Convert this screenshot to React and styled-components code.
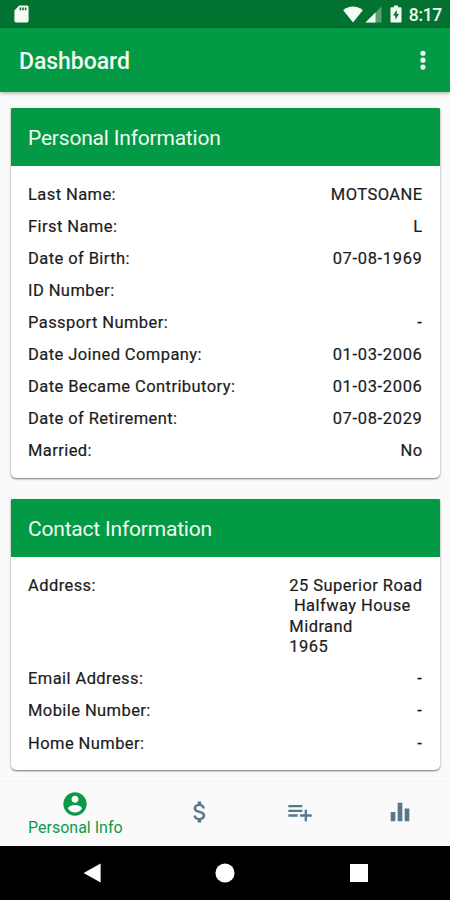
import styled, { createGlobalStyle } from "styled-components";

const GlobalStyle = createGlobalStyle`
	* {
		box-sizing: border-box;
	}
	body {
		margin: 0;
		background-color: #fafafa;
		font-family: Roboto, sans-serif;
	}
`;

const Container = styled.div`
	width: 450px;
	height: 900px;
	display: flex;
	flex-direction: column;
	overflow: hidden;
	background-color: #fafafa;
	color: #1c1c1c;
`;

const StatusBar = styled.div`
	height: 28px;
	flex: none;
	display: flex;
	align-items: center;
	justify-content: space-between;
	padding: 0 8px 0 14px;
	background-color: #027231;
	color: #f3fbf4;
`;

const StatusGroup = styled.div`
	display: flex;
	align-items: center;
`;

const StatusIcon = styled.svg`
	display: block;
	margin-right: ${(props) => props.$gap || 0}px;
`;

const Clock = styled.span`
	font-size: 17.5px;
	font-weight: 500;
	line-height: 28px;
	padding-top: 2px;
	letter-spacing: -0.3px;
`;

const AppBar = styled.header`
	height: 64px;
	flex: none;
	display: flex;
	align-items: center;
	justify-content: space-between;
	padding: 2px 13px 0 19px;
	background-color: #039a46;
	color: #f3fbf4;
	box-shadow: 0 1px 4px rgba(0, 0, 0, 0.35);
`;

const Title = styled.h1`
	margin: 0;
	font-size: 23px;
	font-weight: 500;
	letter-spacing: -0.05px;
`;

const Icon = styled.svg`
	display: block;
	width: 28px;
	height: 28px;
	fill: currentColor;
`;

const Content = styled.main`
	flex: 1;
	min-height: 0;
	display: flex;
	flex-direction: column;
	gap: 21px;
	padding: 16px 10px 0 11px;
`;

const Card = styled.section`
	height: ${(props) => props.$height}px;
	flex: none;
	overflow: hidden;
	border-radius: 1px 1px 5px 5px;
	background-color: #fff;
	box-shadow: 0 1px 2px rgba(0, 0, 0, 0.55);
`;

const CardTitle = styled.h2`
	margin: 0;
	height: 58px;
	padding: 1px 17px 0;
	font-size: 21px;
	font-weight: 400;
	line-height: 58px;
	letter-spacing: -0.2px;
	background-color: #039a46;
	color: #effaf0;
`;

const Rows = styled.dl`
	margin: 0;
	padding: 18.5px 17.5px 0 17px;
	display: flex;
	flex-direction: column;
	gap: 11.5px;
`;

const Row = styled.div`
	display: flex;
	justify-content: space-between;
	font-size: 16.5px;
	line-height: 20.6px;
	-webkit-text-stroke: 0.2px currentColor;
`;

const Label = styled.dt`
	letter-spacing: 0.42px;
`;

const Value = styled.dd`
	margin: 0;
	white-space: pre;
	letter-spacing: ${(props) => (props.$numeric ? 0.65 : 0.44)}px;
`;

const TabBar = styled.nav`
	height: 65px;
	flex: none;
	display: flex;
	border-top: 1px solid #f2f4f4;
	background-color: #fafafa;
`;

const Tab = styled.div`
	flex: ${(props) => (props.$active ? 1.5 : 1)};
	display: flex;
	flex-direction: column;
	align-items: center;
	padding: ${(props) => (props.$active ? 8 : 16)}px 0 0 1px;
	color: ${(props) => (props.$active ? "#0c9a4a" : "#56798a")};
`;

const TabLabel = styled.span`
	font-size: 16px;
	line-height: 19px;
`;

const NavBar = styled.footer`
	height: 54px;
	flex: none;
	display: flex;
	align-items: center;
	justify-content: center;
	gap: 114px;
	background-color: #000;
`;

const NavIcon = styled.svg`
	display: block;
	width: 20px;
	height: 20px;
	fill: #fff;
`;

const personal = [
	["Last Name:", "MOTSOANE"],
	["First Name:", "L"],
	["Date of Birth:", "07-08-1969"],
	["ID Number:", ""],
	["Passport Number:", "-"],
	["Date Joined Company:", "01-03-2006"],
	["Date Became Contributory:", "01-03-2006"],
	["Date of Retirement:", "07-08-2029"],
	["Married:", "No"],
];

const contact = [
	["Address:", "25 Superior Road\n Halfway House\nMidrand\n1965"],
	["Email Address:", "-"],
	["Mobile Number:", "-"],
	["Home Number:", "-"],
];

const tabs = [
	{
		label: "Personal Info",
		path: "M12 2C6.48 2 2 6.48 2 12s4.48 10 10 10 10-4.48 10-10S17.52 2 12 2zm0 3c1.66 0 3 1.34 3 3s-1.34 3-3 3-3-1.34-3-3 1.34-3 3-3zm0 14.2c-2.5 0-4.71-1.28-6-3.22.03-1.99 4-3.08 6-3.08 1.99 0 5.97 1.09 6 3.08-1.29 1.94-3.5 3.22-6 3.22z",
	},
	{
		path: "M11.8 10.9c-2.27-.59-3-1.2-3-2.15 0-1.09 1.01-1.85 2.7-1.85 1.78 0 2.44.85 2.5 2.1h2.21c-.07-1.72-1.12-3.3-3.21-3.81V3h-3v2.16c-1.94.42-3.5 1.68-3.5 3.61 0 2.31 1.91 3.46 4.7 4.13 2.5.6 3 1.48 3 2.41 0 .69-.49 1.79-2.7 1.79-2.06 0-2.87-.92-2.98-2.1h-2.2c.12 2.19 1.76 3.42 3.68 3.83V21h3v-2.15c1.95-.37 3.5-1.5 3.5-3.55 0-2.84-2.43-3.81-4.7-4.4z",
	},
	{
		path: "M14 10H2v2h12v-2zm0-4H2v2h12V6zm4 8v-4h-2v4h-4v2h4v4h2v-4h4v-2h-4zM2 16h8v-2H2v2z",
	},
	{
		path: "M10 20h4V4h-4v16zm-6 0h4v-8H4v8zM16 9v11h4V9h-4z",
	},
];

const InfoCard = ({ title, rows, height }) => (
	<Card $height={height}>
		<CardTitle>{title}</CardTitle>
		<Rows>
			{rows.map(([label, value]) => (
				<Row key={label}>
					<Label>{label}</Label>
					<Value $numeric={/^[\d-]+$/.test(value)}>{value}</Value>
				</Row>
			))}
		</Rows>
	</Card>
);

const App = () => {
	return (
		<>
			<GlobalStyle />
			<Container>
				<StatusBar>
					<StatusIcon width="15" height="18" viewBox="0 0 15 18" fill="currentColor">
						<path
							fillRule="evenodd"
							d="M5.2 0.6H13a1.6 1.6 0 0 1 1.6 1.6v13.6a1.6 1.6 0 0 1-1.6 1.6H2a1.6 1.6 0 0 1-1.6-1.6V5.4zM5.6 2.4v2.8h1.6V2.4zM8.2 2.4v2.8h1.6V2.4zM10.8 2.4v2.8h1.6V2.4z"
						/>
					</StatusIcon>
					<StatusGroup>
						<StatusIcon $gap={2} width="20" height="17" viewBox="0 0 20 17" fill="currentColor">
							<path d="M10 16.6L0.2 4.2C3 1.8 6.3 .5 10 .5s7 1.3 9.8 3.7z" />
						</StatusIcon>
						<StatusIcon $gap={8} width="17" height="17" viewBox="0 0 17 17" fill="currentColor">
							<path opacity="0.35" d="M0.5 16.5L16.5 0.5v16z" />
							<path d="M0.5 16.5L10.5 6.5v10z" />
						</StatusIcon>
						<StatusIcon $gap={7} width="12" height="18" viewBox="0 0 12 18" fill="currentColor">
							<path
								fillRule="evenodd"
								d="M4 .4h4v1.8h2.3c.7 0 1.2.5 1.2 1.2v13c0 .7-.5 1.2-1.2 1.2H1.7c-.7 0-1.2-.5-1.2-1.2v-13c0-.7.5-1.2 1.2-1.2H4zM6.7 4.8L3 10.6h2.3v4.2L9 9H6.7z"
							/>
						</StatusIcon>
						<Clock>8:17</Clock>
					</StatusGroup>
				</StatusBar>
				<AppBar>
					<Title>Dashboard</Title>
					<Icon viewBox="0 0 24 24">
						<circle cx="12" cy="5.4" r="2.2" />
						<circle cx="12" cy="11.3" r="2.2" />
						<circle cx="12" cy="17.2" r="2.2" />
					</Icon>
				</AppBar>
				<Content>
					<InfoCard title="Personal Information" rows={personal} height={370} />
					<InfoCard title="Contact Information" rows={contact} height={271} />
				</Content>
				<TabBar>
					{tabs.map((tab) => (
						<Tab key={tab.path} $active={!!tab.label}>
							<Icon viewBox="0 0 24 24">
								<path d={tab.path} />
							</Icon>
							{tab.label && <TabLabel>{tab.label}</TabLabel>}
						</Tab>
					))}
				</TabBar>
				<NavBar>
					<NavIcon viewBox="0 0 20 20">
						<path d="M2.6 10L19.6 0.4v19.2z" />
					</NavIcon>
					<NavIcon viewBox="0 0 20 20">
						<circle cx="10" cy="10" r="9.6" />
					</NavIcon>
					<NavIcon viewBox="0 0 20 20">
						<rect x="1" y="1" width="18" height="18" />
					</NavIcon>
				</NavBar>
			</Container>
		</>
	);
};

export default App;
